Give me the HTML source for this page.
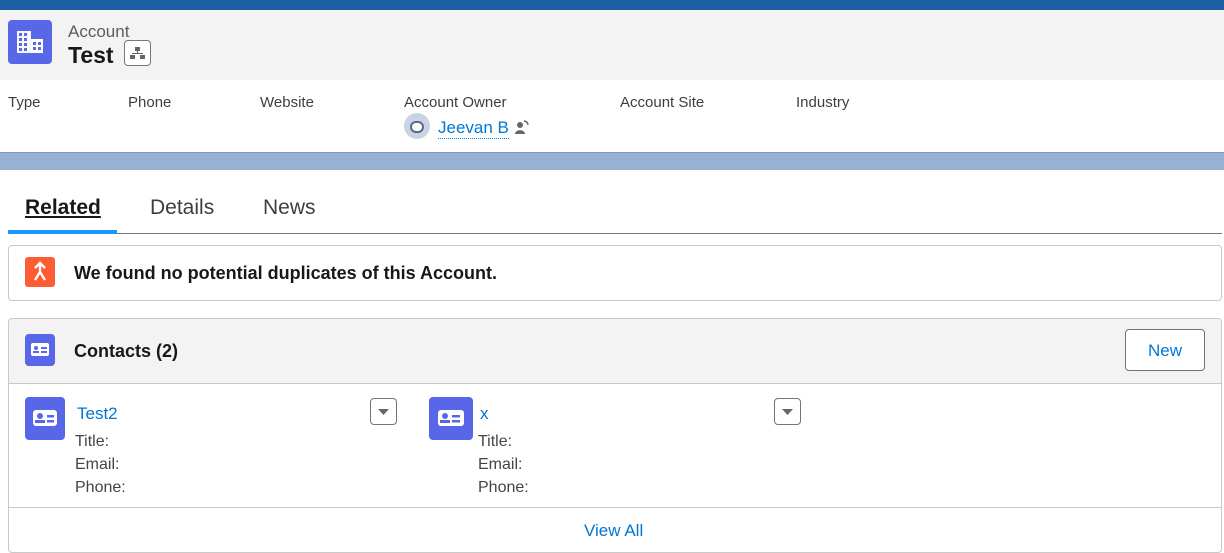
<!DOCTYPE html>
<html><head><style>
*{box-sizing:border-box;margin:0;padding:0}
body{width:1224px;height:553px;overflow:hidden;background:#fff;font-family:"Liberation Sans",sans-serif;color:#181818;position:relative}
.a{position:absolute}
.lbl{font-size:15px;color:#3e3e3c;top:94px}
.ic{background:#5867e8;border-radius:4px}
.link{color:#0176d3}
.f{font-size:16px;color:#444}
</style></head><body>
<div class="a" style="left:0;top:0;width:1224px;height:10px;background:#1b5fa3"></div>
<div class="a" style="left:0;top:10px;width:1224px;height:70px;background:#f3f3f3"></div>
<div class="a ic" style="left:8px;top:20px;width:44px;height:44px">
<svg width="44" height="44" viewBox="0 0 44 44"><rect x="9" y="11" width="14" height="22" fill="#fff" opacity=".95"/><rect x="23" y="19" width="12" height="14" fill="#fff"/><g fill="#5867e8"><rect x="11" y="13" width="3" height="3"/><rect x="16" y="13" width="3" height="3"/><rect x="11" y="18" width="3" height="3"/><rect x="16" y="18" width="3" height="3"/><rect x="11" y="23" width="3" height="3"/><rect x="16" y="23" width="3" height="3"/><rect x="11" y="28" width="3" height="3"/><rect x="16" y="28" width="3" height="3"/><rect x="25" y="22" width="3" height="3"/><rect x="30" y="22" width="3" height="3"/><rect x="25" y="27" width="3" height="3"/><rect x="30" y="27" width="3" height="3"/></g></svg></div>
<div class="a" style="left:68px;top:22px;font-size:17px;color:#5c5c5c">Account</div>
<div class="a" style="left:68px;top:42px;font-size:23px;font-weight:bold">Test</div>
<div class="a" style="left:124px;top:40px;width:27px;height:26px;border:1px solid #777;border-radius:4px;background:#fff">
<svg width="25" height="24"><g fill="#666"><rect x="10" y="6" width="5" height="4"/><rect x="12" y="10" width="1" height="3"/><rect x="7" y="12" width="11" height="1"/><rect x="5" y="14" width="5" height="4"/><rect x="15" y="14" width="5" height="4"/></g></svg></div>
<div class="a lbl" style="left:8px">Type</div>
<div class="a lbl" style="left:128px">Phone</div>
<div class="a lbl" style="left:260px">Website</div>
<div class="a lbl" style="left:404px">Account Owner</div>
<div class="a lbl" style="left:620px">Account Site</div>
<div class="a lbl" style="left:796px">Industry</div>
<div class="a" style="left:404px;top:113px;width:26px;height:26px;border-radius:50%;background:#c8d3e3"><div class="a" style="left:6px;top:8px;width:14px;height:12px;border-radius:6px;background:#fff;border:2px solid #5a6a80"></div></div>
<div class="a link" style="left:438px;top:118px;font-size:17px;border-bottom:1px dotted #0176d3">Jeevan B</div>
<div class="a" style="left:514px;top:119px;width:16px;height:16px"><svg width="16" height="16"><circle cx="6" cy="6" r="3" fill="#666"/><path d="M1 15c0-5 10-5 10 0z" fill="#666"/><path d="M10 2a4 4 0 0 1 4 4" stroke="#666" fill="none" stroke-width="1.5"/></svg></div>
<div class="a" style="left:0;top:152px;width:1224px;height:18px;background:#97b1d4;border-top:1px solid #7d9ac2"></div>
<div class="a" style="left:25px;top:196px;font-size:21px;font-weight:bold;text-decoration:underline">Related</div>
<div class="a" style="left:150px;top:196px;font-size:21px;color:#3e3e3c">Details</div>
<div class="a" style="left:263px;top:196px;font-size:21px;color:#3e3e3c">News</div>
<div class="a" style="left:8px;top:233px;width:1214px;height:1px;background:#777"></div>
<div class="a" style="left:8px;top:230px;width:109px;height:4px;background:#1b96ff"></div>
<div class="a" style="left:8px;top:245px;width:1214px;height:56px;border:1px solid #c9c9c9;border-radius:4px"></div>
<div class="a" style="left:25px;top:257px;width:30px;height:30px;background:#fe5c33;border-radius:3px"><svg width="30" height="30"><path d="M15 7v8M10 11l5-5 5 5M15 15l-5 8M15 15l5 8" stroke="#fff" stroke-width="2.4" fill="none"/></svg></div>
<div class="a" style="left:74px;top:263px;font-size:18px;font-weight:bold">We found no potential duplicates of this Account.</div>
<div class="a" style="left:8px;top:318px;width:1214px;height:235px;border:1px solid #c9c9c9;border-radius:4px;overflow:hidden">
<div style="height:65px;background:#f3f3f3;border-bottom:1px solid #c9c9c9"></div></div>
<div class="a ic" style="left:25px;top:334px;width:30px;height:32px"><svg width="30" height="32"><rect x="6" y="9" width="18" height="13" rx="2" fill="#fff"/><circle cx="11" cy="14" r="2" fill="#5867e8"/><path d="M8 19h6v-2h-6z" fill="#5867e8"/><rect x="16" y="13" width="6" height="2" fill="#5867e8"/><rect x="16" y="17" width="6" height="2" fill="#5867e8"/></svg></div>
<div class="a" style="left:74px;top:341px;font-size:18px;font-weight:bold">Contacts (2)</div>
<div class="a link" style="left:1125px;top:329px;width:80px;height:42px;border:1px solid #747474;border-radius:4px;background:#fff;font-size:17px;text-align:center;line-height:42px">New</div>
<div class="a ic" style="left:25px;top:397px;width:40px;height:43px"><svg width="40" height="43"><rect x="8" y="13" width="24" height="16" rx="3" fill="#fff"/><circle cx="15" cy="19" r="3" fill="#5867e8"/><path d="M10 26h10v-3h-10z" fill="#5867e8"/><rect x="22" y="18" width="7" height="2.5" fill="#5867e8"/><rect x="22" y="23" width="7" height="2.5" fill="#5867e8"/></svg></div>
<div class="a link" style="left:77px;top:404px;font-size:17px">Test2</div>
<div class="a f" style="left:75px;top:430px;line-height:23px">Title:<br>Email:<br>Phone:</div>
<div class="a" style="left:370px;top:398px;width:27px;height:27px;border:1px solid #747474;border-radius:4px"><svg width="25" height="25"><path d="M7 10h11l-5.5 6z" fill="#666"/></svg></div>
<div class="a ic" style="left:429px;top:397px;width:44px;height:43px"><svg width="44" height="43"><rect x="9" y="13" width="26" height="16" rx="3" fill="#fff"/><circle cx="16" cy="19" r="3" fill="#5867e8"/><path d="M11 26h10v-3h-10z" fill="#5867e8"/><rect x="23" y="18" width="8" height="2.5" fill="#5867e8"/><rect x="23" y="23" width="8" height="2.5" fill="#5867e8"/></svg></div>
<div class="a link" style="left:480px;top:404px;font-size:17px">x</div>
<div class="a f" style="left:478px;top:430px;line-height:23px">Title:<br>Email:<br>Phone:</div>
<div class="a" style="left:774px;top:398px;width:27px;height:27px;border:1px solid #747474;border-radius:4px"><svg width="25" height="25"><path d="M7 10h11l-5.5 6z" fill="#666"/></svg></div>
<div class="a" style="left:9px;top:507px;width:1212px;height:1px;background:#c9c9c9"></div>
<div class="a link" style="left:584px;top:521px;font-size:17px">View All</div>
</body></html>
